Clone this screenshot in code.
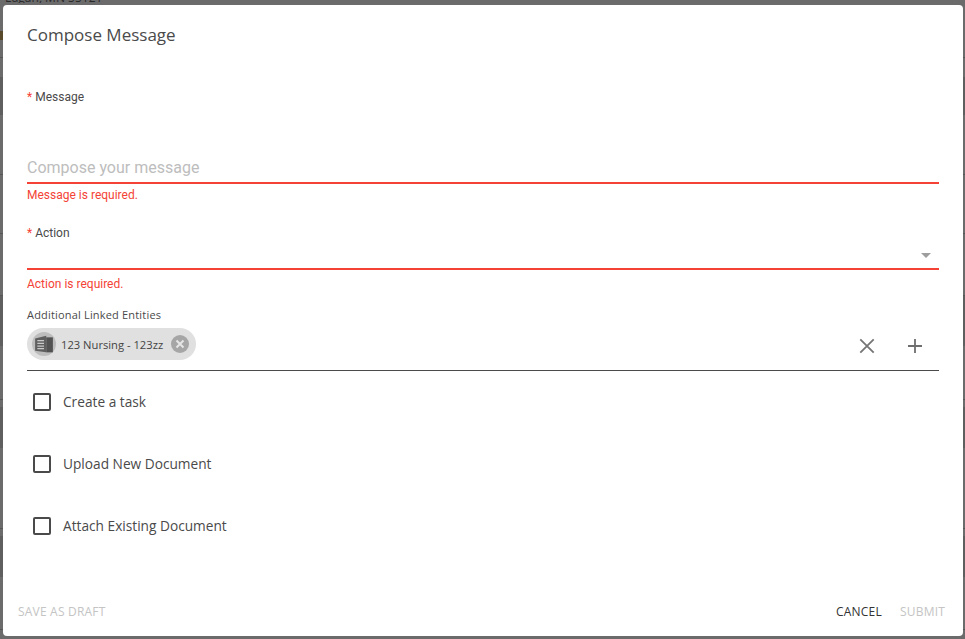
<style>
:global(body) { margin: 0; background: #6e6e6e; overflow: hidden; }
.page { width: 965px; height: 639px; position: relative; overflow: hidden; background: #6b6b6b; font-family: "Open Sans", sans-serif; }
.behind { display: flex; flex-direction: column; height: 100%; }
.addr { height: 3px; overflow: hidden; font: 12px/14px "Open Sans", sans-serif; color: #2a2a2a; padding-left: 5px; flex: none; }
.addr span { display: block; margin-top: -9px; }
.tag { position: absolute; left: 0; top: 31px; width: 3px; height: 9px; background: #5a4a2c; }
.row { flex: none; }
.line { border-bottom: 1px solid #565656; }
.dark { background: #5f5f5f; }
.overlay { position: absolute; left: 3px; top: 5px; width: 960px; height: 631px; background: #fff; border-radius: 4px; display: flex; flex-direction: column; box-sizing: border-box; }
h2 { margin: 0; font-size: 17px; line-height: 24px; font-weight: 400; color: #4a4a4a; padding: 18px 24px 0; }
.form { padding: 0 24px; display: flex; flex-direction: column; flex: 1; }
.req { color: #f44336; }
.label { font: 12px/16px Roboto, sans-serif; color: #4a4a4a; }
.label.msg { margin-top: 42px; }
.ph { font: 16px/20px Roboto, sans-serif; color: #bdbdbd; margin-top: 53px; padding-bottom: 4px; border-bottom: 2px solid #f44336; }
.err { font: 12px/16px Roboto, sans-serif; color: #f44336; margin-top: 3px; }
.label.act { margin-top: 22px; }
.select { height: 26px; border-bottom: 2px solid #f44336; display: flex; justify-content: flex-end; align-items: center; padding-right: 8px; margin-top: 1px; }
.caret { width: 0; height: 0; border-left: 5px solid transparent; border-right: 5px solid transparent; border-top: 5px solid #9e9e9e; margin-top: 0; }
.err.e2 { margin-top: 6px; }
.linked-label { font-size: 11px; line-height: 14px; color: #4a4a4a; margin-top: 16px; letter-spacing: 0.18px; }
.linked { display: flex; align-items: flex-start; height: 42px; margin-top: 6px; border-bottom: 1px solid #4a4a4a; }
.chip { display: flex; align-items: center; height: 32px; background: #e0e0e0; border-radius: 16px; padding: 0 7px 0 5px; }
.avatar { width: 24px; height: 24px; border-radius: 50%; background: #bdbdbd; display: flex; align-items: center; justify-content: center; }
.chip-text { font-size: 11.2px; color: #444; margin: 0 8px 0 5px; white-space: nowrap; }
.spacer { flex: 1; }
.icon { display: block; flex: none; }
.i-x { margin: 10px 32px 0 0; }
.i-plus { margin: 10px 16px 0 0; }
.checks { display: flex; flex-direction: column; gap: 38px; margin-top: 18px; padding-left: 6px; }
.check { display: flex; align-items: center; height: 24px; font-size: 13.7px; color: #4a4a4a; }
.box { width: 14px; height: 14px; border: 2px solid #4a4a4a; border-radius: 2px; margin: 1px 12px 0 0; }
.actions { display: flex; align-items: center; justify-content: space-between; padding: 0 18px 0 15px; height: 36px; margin-bottom: 7px; font-size: 12px; font-weight: 500; letter-spacing: 0.2px; }
.off { color: #c4c4c4; }
.on { color: #333; margin-right: 18px; }
.group { display: flex; }
</style>

<div class="page">
  <div class="behind">
    <div class="addr"><span>Eagan, MN 55121</span></div>
    <div class="row line" style="height:54px"></div>
    <div class="row" style="height:19px"></div>
    <div class="row dark" style="height:38px"></div>
    <div class="row line" style="height:59px"></div>
    <div class="row line" style="height:58px"></div>
    <div class="row line" style="height:61px"></div>
    <div class="row dark" style="height:50px"></div>
    <div class="row line" style="height:53px"></div>
    <div class="row" style="height:7px"></div>
    <div class="row dark" style="height:41px"></div>
    <div class="row line" style="height:80px"></div>
    <div class="row" style="height:7px"></div>
    <div class="row dark" style="height:41px"></div>
    <div class="row line" style="height:52px"></div>
  </div>
  <div class="tag"></div>

  <div class="overlay">
    <h2>Compose Message</h2>
    <div class="form">
      <div class="label msg"><span class="req">*</span> Message</div>
      <div class="ph">Compose your message</div>
      <div class="err">Message is required.</div>
      <div class="label act"><span class="req">*</span> Action</div>
      <div class="select"><div class="caret"></div></div>
      <div class="err e2">Action is required.</div>
      <div class="linked-label">Additional Linked Entities</div>
      <div class="linked">
        <div class="chip">
          <div class="avatar">
            <svg width="20" height="20" viewBox="0 0 18 18" class="icon">
              <path d="M1 4 L11 1.5 L11 16.5 L1 15 Z" fill="#5f5f5f"/>
              <path d="M11 3 H17 V16.5 H11 Z" fill="#525252"/>
              <path d="M3 6h6M3 8.5h6M3 11h6M3 13.2h6" stroke="#c9c9c9" stroke-width="1.1"/>
            </svg>
          </div>
          <span class="chip-text">123 Nursing - 123zz</span>
          <svg width="18" height="18" viewBox="0 0 18 18" class="icon">
            <circle cx="9" cy="9" r="9" fill="#a6a6a6"/>
            <path d="M5.5 5.5l7 7M12.5 5.5l-7 7" stroke="#e6e6e6" stroke-width="2"/>
          </svg>
        </div>
        <div class="spacer"></div>
        <svg width="16" height="16" viewBox="0 0 16 16" class="icon i-x">
          <path d="M1.3 1.3l13.4 13.4M14.7 1.3L1.3 14.7" stroke="#757575" stroke-width="1.8" fill="none"/>
        </svg>
        <svg width="16" height="16" viewBox="0 0 16 16" class="icon i-plus">
          <path d="M8 1v14M1 8h14" stroke="#6e6e6e" stroke-width="1.8" fill="none"/>
        </svg>
      </div>
      <div class="checks">
        <div class="check"><div class="box"></div>Create a task</div>
        <div class="check"><div class="box"></div>Upload New Document</div>
        <div class="check"><div class="box"></div>Attach Existing Document</div>
      </div>
    </div>
    <div class="actions">
      <span class="off">SAVE AS DRAFT</span>
      <div class="group">
        <span class="on">CANCEL</span>
        <span class="off">SUBMIT</span>
      </div>
    </div>
  </div>
</div>
